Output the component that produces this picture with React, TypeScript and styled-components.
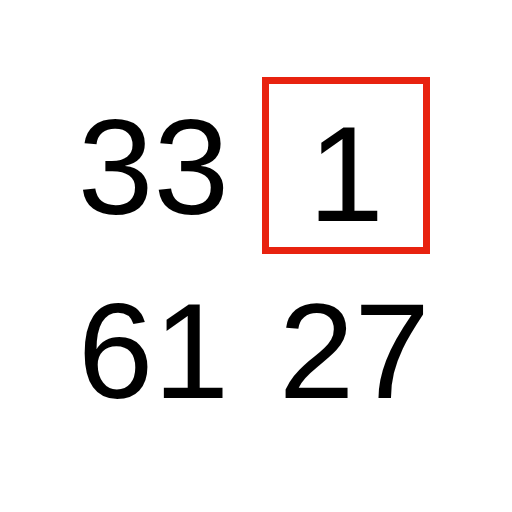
import React from "react";
import styled, { createGlobalStyle } from "styled-components";

const Global = createGlobalStyle`
  html, body {
    margin: 0;
    padding: 0;
    background: #ffffff;
  }
  body {
    font-family: "Liberation Sans", Arial, Helvetica, sans-serif;
  }
`;

const Page = styled.div`
  width: 512px;
  height: 512px;
  box-sizing: border-box;
  padding: 77px 0 0 75px;
  background: #ffffff;
`;

const Grid = styled.div`
  display: grid;
  grid-template-columns: 157px 168px;
  column-gap: 30px;
  row-gap: 7px;
  align-items: start;
`;

const Cell = styled.div<{ $selected?: boolean; $align?: "center" | "right" }>`
  box-sizing: border-box;
  padding: 22px 0 5px;
  font-size: 136px;
  line-height: 136px;
  color: #000000;
  text-align: ${(p) => p.$align ?? "center"};
  border: ${(p) => (p.$selected ? "7px solid #e8220f" : "none")};
`;

const values: { v: number; selected?: boolean; align?: "center" | "right" }[] = [
  { v: 33 },
  { v: 1, selected: true },
  { v: 61 },
  { v: 27, align: "right" },
];

export default function App() {
  return (
    <>
      <Global />
      <Page>
        <Grid>
          {values.map((c, i) => (
            <Cell key={i} $selected={c.selected} $align={c.align}>
              {c.v}
            </Cell>
          ))}
        </Grid>
      </Page>
    </>
  );
}
